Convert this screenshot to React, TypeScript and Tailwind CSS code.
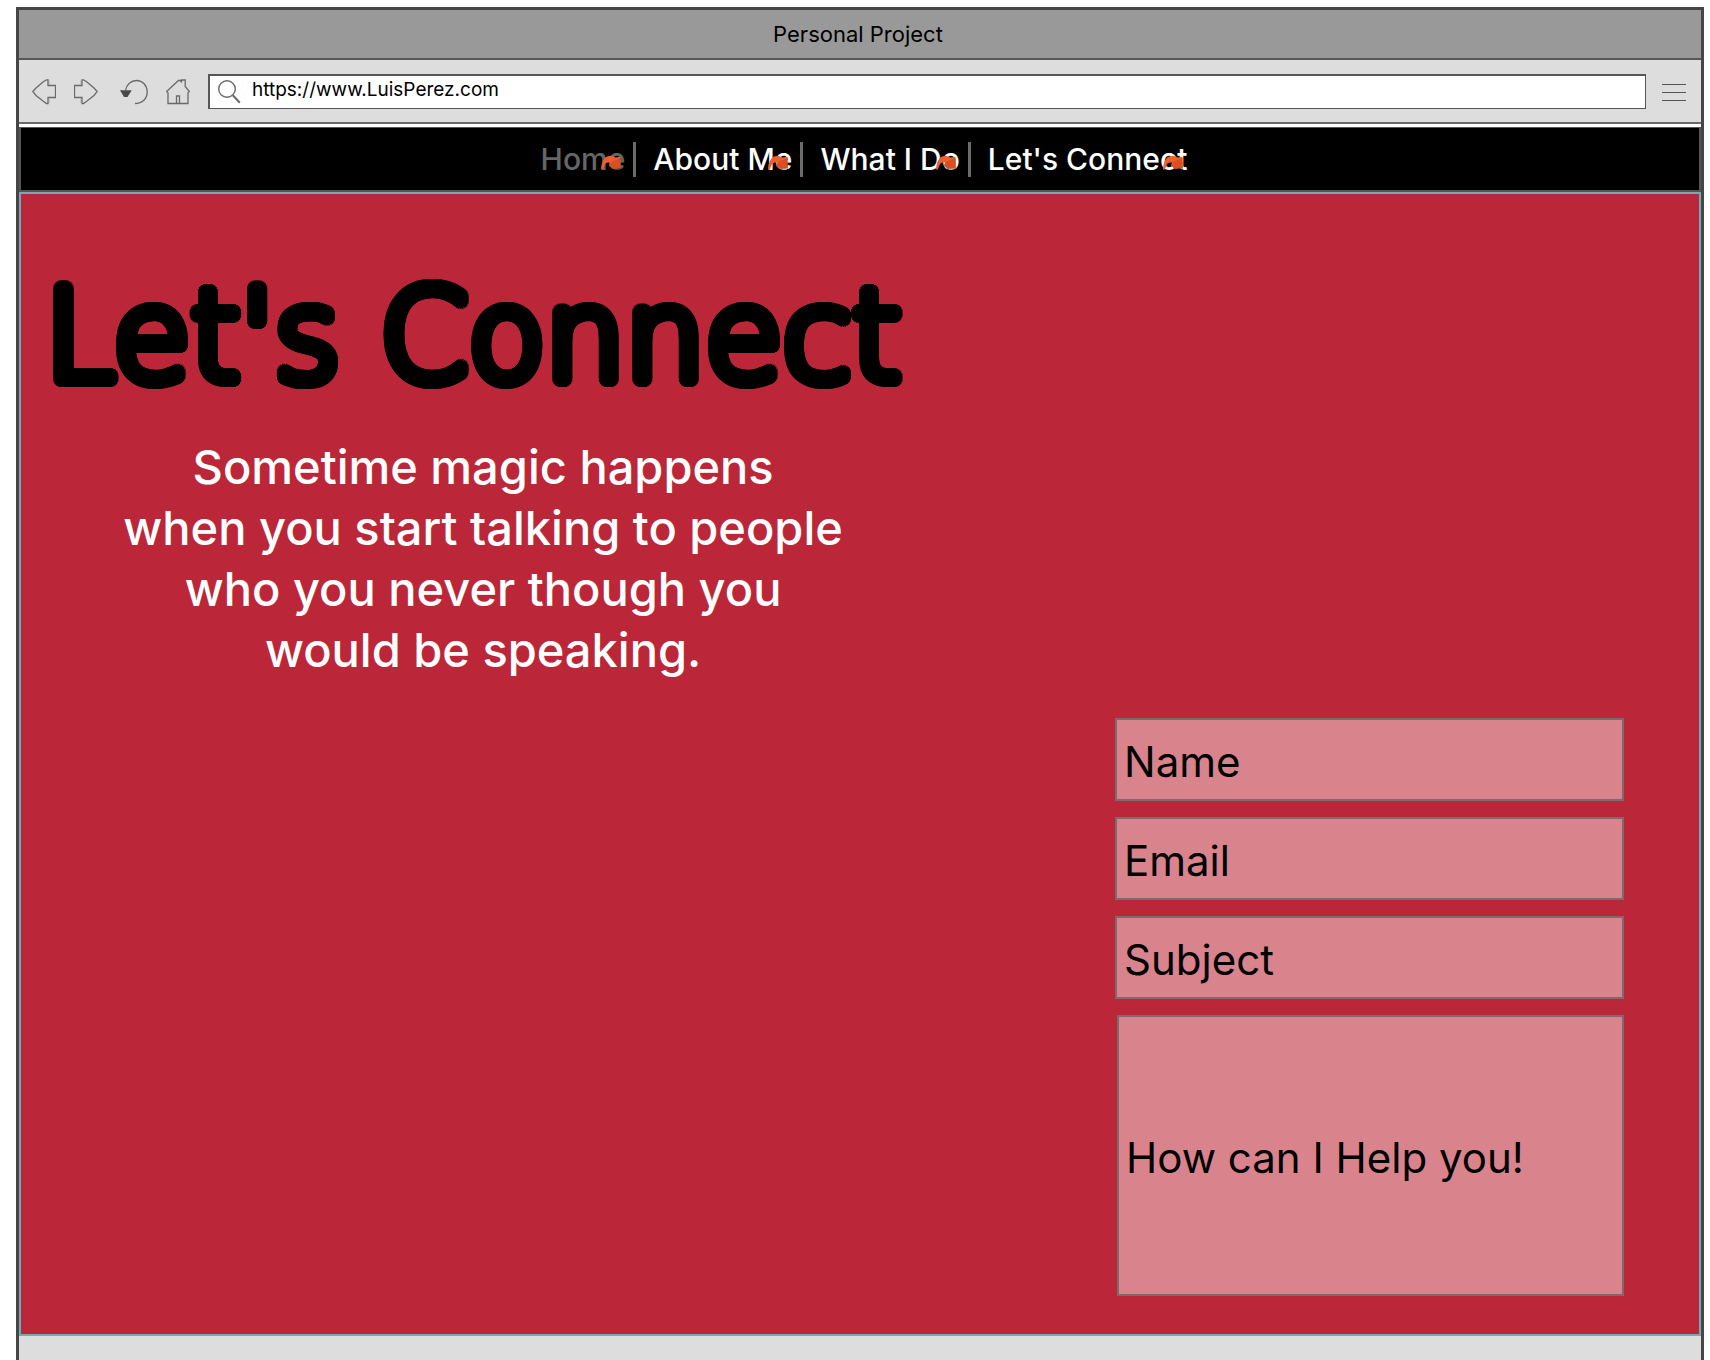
import React from "react";

const navLinks = [
  { label: "Home", current: true },
  { label: "About Me", current: false },
  { label: "What I Do", current: false },
  { label: "Let's Connect", current: false },
];

const fieldClass =
  "block rounded-none border-2 border-[#7b6a6e] bg-[#d9838d] pl-[7px] text-[42px] leading-[50px] text-black outline-none placeholder:text-black placeholder:opacity-100";

function BackIcon() {
  return (
    <svg width="24" height="26" viewBox="0 0 24 26" fill="none" stroke="#6a6a6a" aria-hidden="true">
      <path d="M17.5 1.5v4M17.5 20v4" stroke="#c2c2c2" />
      <path d="M.8 12.5 4 9l7-6 3.500-2.200h1.500v5.700h7.500v12H16v6h-1.500L11 22l-7-5.500z" strokeWidth="1.300" />
    </svg>
  );
}

function ForwardIcon() {
  return (
    <svg width="24" height="26" viewBox="0 0 24 26" fill="none" stroke="#6a6a6a" aria-hidden="true">
      <path d="M6.500 1.500v4M6.500 20v4" stroke="#c2c2c2" />
      <path d="M23.200 12.500 20 9l-7-6L9.500.8H8v5.700H.5v12H8v6h1.500L13 22l7-5.500z" strokeWidth="1.300" />
    </svg>
  );
}

function ReloadIcon() {
  return (
    <svg width="32" height="26" viewBox="0 0 32 26" fill="none" aria-hidden="true">
      <path d="M9.500 11.500C10.500 5.500 15 1.500 20.500 1.500c6 0 10.700 5 10.700 11.500S26.500 24.500 19 24.500" stroke="#6a6a6a" strokeWidth="1.300" />
      <path d="M4 11.200h11.700L11.500 18H8z" fill="#484848" />
    </svg>
  );
}

function HomeIcon() {
  return (
    <svg width="24" height="26" viewBox="0 0 24 26" fill="none" stroke="#6a6a6a" strokeWidth="1.300" aria-hidden="true">
      <path d="M.6 12.500 12.500 1.500h2l1 2V1h3.700v6.500l4.200 5-1.400 1.200v10.800H2V13.700z" />
      <path d="M10.500 24.500V17h3v7.500" />
    </svg>
  );
}

function SearchIcon() {
  return (
    <svg width="24" height="26" viewBox="0 0 24 26" fill="none" stroke="#6a6a6a" aria-hidden="true">
      <circle cx="9" cy="10" r="8.300" strokeWidth="1.400" />
      <path d="m14.800 16.300 7 7.500" strokeWidth="2" />
    </svg>
  );
}

function MenuIcon() {
  return (
    <svg width="24" height="17" viewBox="0 0 24 17" stroke="#555" aria-hidden="true">
      <path d="M0 .5h24M0 8.500h24M0 16.500h24" />
    </svg>
  );
}

function LinkMarker() {
  return (
    <svg
      className="pointer-events-none absolute right-[3px] bottom-0 h-[24px] w-[22px]"
      viewBox="0 0 22 24"
      fill="none"
      aria-hidden="true"
    >
      <path d="M10 9h11v12H13z" fill="#000" fillOpacity=".3" />
      <path d="M1 16.500C1.500 9 4 3.500 9 3c3-.2 5 .5 6.500 1.500l5-.8V15l-7.500.8-4-3.300 1-3C7 9 5 10 4.200 13L2.800 16.500z" fill="#ea6130" />
      <path d="m12 8.500 8.500-3.500v10l-7.500.8L9 12.500z" fill="#d94f20" />
    </svg>
  );
}

export default function App() {
  return (
    <div className="flex min-h-screen flex-col bg-white pt-[7px] pr-1.5 pl-4 font-['Inter',sans-serif] text-black">
      <div className="flex flex-1 flex-col border-x-3 border-t-3 border-[#464646]">
        <header>
          <div className="flex h-[50px] items-center justify-center border-b-2 border-[#575757] bg-[#999] pr-1">
            <p className="text-[22px] leading-[28px]">Personal Project</p>
          </div>
          <div className="flex h-16 items-center gap-[18px] border-b-2 border-[#6b6b6b] bg-[#ddd] pr-[15px] pl-[13px]">
            <button type="button" aria-label="Back" className="pt-0.5"><BackIcon /></button>
            <button type="button" aria-label="Forward" className="pt-0.5"><ForwardIcon /></button>
            <button type="button" aria-label="Reload" className="pt-0.5"><ReloadIcon /></button>
            <button type="button" aria-label="Home page" className="pt-0.5"><HomeIcon /></button>
            <label className="mr-[-2px] flex h-[35px] flex-1 items-center gap-2.5 border-t-2 border-r border-b border-l-2 border-[#575757] bg-white pl-2">
              <SearchIcon />
              <input
                type="text"
                aria-label="Address"
                defaultValue="https://www.LuisPerez.com"
                className="min-w-0 flex-1 bg-transparent pb-1 text-[19px] leading-[24px] outline-none"
              />
            </label>
            <button type="button" aria-label="Menu" className="pt-0.5"><MenuIcon /></button>
          </div>
        </header>

        <nav
          aria-label="Main"
          className="mt-[3px] flex h-[65px] items-center justify-center border-2 border-t border-[#555] bg-black pl-2"
        >
          {navLinks.map((link, index) => (
            <React.Fragment key={link.label}>
              {index > 0 && <span className="mr-[17px] ml-2 h-[35px] w-[3px] bg-[#6b6b6b]" />}
              <a
                href="#"
                aria-current={link.current ? "page" : undefined}
                className={
                  link.current
                    ? "relative text-[30px] leading-[36px] font-medium text-[#666]"
                    : "relative text-[30px] leading-[36px] font-medium text-white"
                }
              >
                {link.label}
                <LinkMarker />
              </a>
            </React.Fragment>
          ))}
        </nav>

        <main className="border-2 border-[#74a9b8] bg-[#bb2738] px-6 pt-20 pb-[38px]">
          <div className="w-fit text-center">
            <h1 className="font-['DejaVu_Sans',sans-serif] text-[126px] leading-[126px] font-extralight whitespace-nowrap [text-shadow:7px_0_#000,-7px_0_#000,0_7px_#000,0_-7px_#000,7px_2px_#000,-7px_2px_#000,7px_-2px_#000,-7px_-2px_#000,6px_4px_#000,-6px_4px_#000,6px_-4px_#000,-6px_-4px_#000,5px_5px_#000,-5px_5px_#000,5px_-5px_#000,-5px_-5px_#000,4px_6px_#000,-4px_6px_#000,4px_-6px_#000,-4px_-6px_#000,2px_7px_#000,-2px_7px_#000,2px_-7px_#000,-2px_-7px_#000,4px_0_#000,-4px_0_#000,0_4px_#000,0_-4px_#000,3px_3px_#000,-3px_3px_#000,3px_-3px_#000,-3px_-3px_#000]">
              Let's Connect
            </h1>
            <p className="mt-9 pl-5 text-[47px] leading-[61px] font-medium text-white">
              Sometime magic happens
              <br />
              when you start talking to people
              <br />
              who you never though you
              <br />
              would be speaking.
            </p>
          </div>
          <form className="mt-[38px] mr-[51px] ml-auto flex w-[509px] flex-col gap-4">
            <input type="text" aria-label="Name" placeholder="Name" className={`${fieldClass} h-[83px] pt-[3px]`} />
            <input type="email" aria-label="Email" placeholder="Email" className={`${fieldClass} h-[83px] pt-[3px]`} />
            <input type="text" aria-label="Subject" placeholder="Subject" className={`${fieldClass} h-[83px] pt-[3px]`} />
            <textarea
              aria-label="How can I Help you!"
              placeholder="How can I Help you!"
              className={`${fieldClass} ml-0.5 h-[281px] resize-none pt-[116px]`}
            />
          </form>
        </main>
        <footer className="flex-1 bg-[#ddd]" />
      </div>
    </div>
  );
}
